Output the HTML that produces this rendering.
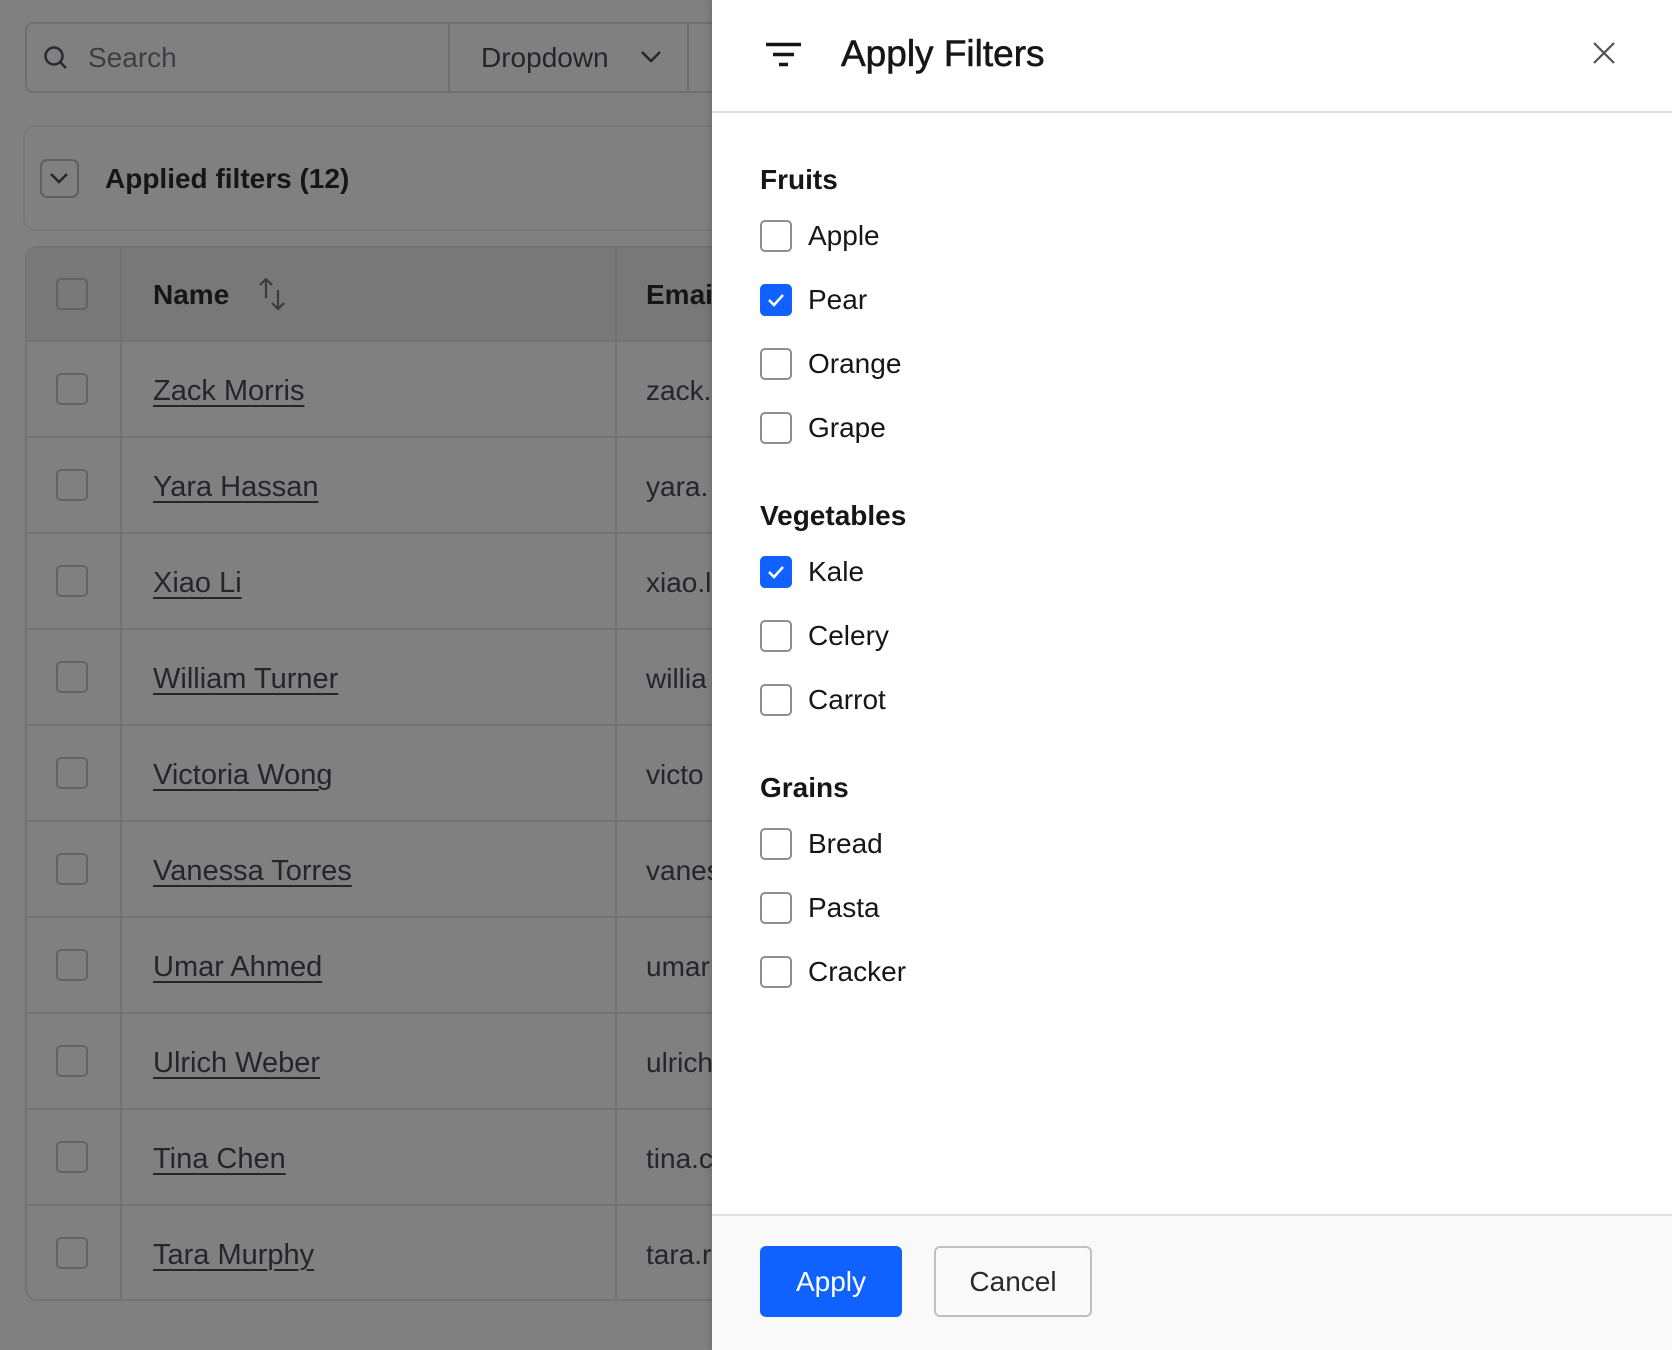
<!DOCTYPE html>
<html><head><meta charset="utf-8"><style>
*{box-sizing:border-box;margin:0;padding:0}
body{width:1672px;height:1350px;overflow:hidden;background:#808080;font-family:"Liberation Sans",sans-serif;position:relative}
.a{position:absolute}
.cb{position:absolute;width:32px;height:32px;border:2px solid #636367;border-radius:5px}
.tx{position:absolute;font-size:28px;color:#25252a;line-height:32px;white-space:nowrap}
.nm{font-size:29px;text-decoration:underline;text-decoration-thickness:2px;text-underline-offset:5px}
.hl{position:absolute;left:25px;width:700px;height:2px;background:#737373}
.pcb{position:absolute;left:760px;width:32px;height:32px;border:2px solid #8d8d92;border-radius:5px;background:#fff}
.pcb.on{background:#0f62fe;border-color:#0f62fe}
.lbl{position:absolute;left:808px;font-size:28px;color:#161616;line-height:32px}
.hd{position:absolute;left:760px;font-size:28px;font-weight:bold;color:#161616;line-height:32px}
</style></head><body>
<div class="a" style="left:25px;top:22px;width:720px;height:71px;border:2px solid #6f6f6f;border-radius:8px"></div>
<div class="a" style="left:448px;top:22px;width:2px;height:71px;background:#6f6f6f"></div>
<div class="a" style="left:687px;top:22px;width:2px;height:71px;background:#6f6f6f"></div>
<svg class="a" style="left:42px;top:44px" width="28" height="28" viewBox="0 0 28 28"><circle cx="12" cy="12" r="8.5" fill="none" stroke="#2a2a2e" stroke-width="2.5"/><path d="M18 18l6 6" stroke="#2a2a2e" stroke-width="2.5"/></svg>
<div class="tx" style="left:88px;top:42px;color:#3e3e42">Search</div>
<div class="tx" style="left:481px;top:42px">Dropdown</div>
<svg class="a" style="left:640px;top:48px" width="22" height="16" viewBox="0 0 22 16"><path d="M2 4l9 9 9-9" fill="none" stroke="#25252a" stroke-width="2.5"/></svg>
<div class="a" style="left:23px;top:125px;width:720px;height:106px;border:2px solid #787878;border-radius:12px"></div>
<div class="a" style="left:40px;top:159px;width:39px;height:39px;border:2px solid #606064;border-radius:7px"></div>
<svg class="a" style="left:48px;top:170px" width="22" height="16" viewBox="0 0 22 16"><path d="M3 4l8 8 8-8" fill="none" stroke="#25252a" stroke-width="2.5"/></svg>
<div class="tx" style="left:105px;top:163px;font-weight:bold;color:#161616">Applied filters (12)</div>
<div class="a" style="left:25px;top:246px;width:700px;height:1055px;border:2px solid #737373;border-radius:12px;border-right:none"></div>
<div class="a" style="left:27px;top:248px;width:690px;height:93px;background:#787878"></div>
<div class="a" style="left:120px;top:246px;width:2px;height:1055px;background:#737373"></div>
<div class="a" style="left:615px;top:246px;width:2px;height:1055px;background:#737373"></div>
<div class="tx" style="left:153px;top:279px;font-weight:bold;color:#161616">Name</div>
<svg class="a" style="left:257px;top:276px" width="32" height="36" viewBox="0 0 32 36"><path d="M9 22V3M3 9l6-6 6 6M21 14v19M15 27l6 6 6-6" fill="none" stroke="#3a3a40" stroke-width="2.2"/></svg>
<div class="tx" style="left:646px;top:279px;font-weight:bold;color:#161616">Email</div>
<div class="cb" style="left:56px;top:278px"></div>
<div id="rows"></div>
<script>
var n=["Zack Morris","Yara Hassan","Xiao Li","William Turner","Victoria Wong","Vanessa Torres","Umar Ahmed","Ulrich Weber","Tina Chen","Tara Murphy"];
var e=["zack.","yara.","xiao.l","willia","victo","vanes","umar","ulrich","tina.c","tara.r"];
var h="";
for(var i=0;i<10;i++){var t=341+i*96;
h+='<div class="hl" style="top:'+(t-1)+'px"></div>';
h+='<div class="cb" style="left:56px;top:'+(t+32)+'px"></div>';
h+='<div class="tx nm" style="left:153px;top:'+(t+34)+'px">'+n[i]+'</div>';
h+='<div class="tx" style="left:646px;top:'+(t+34)+'px">'+e[i]+'</div>';}
document.getElementById("rows").innerHTML=h;
</script>
<div class="a" style="left:712px;top:0;width:960px;height:1350px;background:#fff;box-shadow:-2px 0 6px rgba(0,0,0,.15)"></div>
<div class="a" style="left:712px;top:111px;width:960px;height:2px;background:#e0e0e0"></div>
<svg class="a" style="left:765px;top:42px" width="38" height="26" viewBox="0 0 38 26"><path d="M1 2.5h35M8 12.5h21M14 22.5h9" stroke="#161616" stroke-width="3.6"/></svg>
<div class="a" style="left:841px;top:34px;font-size:37px;color:#161616;line-height:40px;-webkit-text-stroke:0.6px #161616">Apply Filters</div>
<svg class="a" style="left:1592px;top:41px" width="24" height="24" viewBox="0 0 24 24"><path d="M2 2l20 20M22 2L2 22" stroke="#525256" stroke-width="2.2"/></svg>
<div class="hd" style="top:164px">Fruits</div>
<div class="pcb" style="top:220px"></div><div class="lbl" style="top:220px">Apple</div>
<div class="pcb on" style="top:284px"><svg width="28" height="28" viewBox="0 0 28 28"><path d="M7 14l5 5 9-10" fill="none" stroke="#fff" stroke-width="2.5"/></svg></div><div class="lbl" style="top:284px">Pear</div>
<div class="pcb" style="top:348px"></div><div class="lbl" style="top:348px">Orange</div>
<div class="pcb" style="top:412px"></div><div class="lbl" style="top:412px">Grape</div>
<div class="hd" style="top:500px">Vegetables</div>
<div class="pcb on" style="top:556px"><svg width="28" height="28" viewBox="0 0 28 28"><path d="M7 14l5 5 9-10" fill="none" stroke="#fff" stroke-width="2.5"/></svg></div><div class="lbl" style="top:556px">Kale</div>
<div class="pcb" style="top:620px"></div><div class="lbl" style="top:620px">Celery</div>
<div class="pcb" style="top:684px"></div><div class="lbl" style="top:684px">Carrot</div>
<div class="hd" style="top:772px">Grains</div>
<div class="pcb" style="top:828px"></div><div class="lbl" style="top:828px">Bread</div>
<div class="pcb" style="top:892px"></div><div class="lbl" style="top:892px">Pasta</div>
<div class="pcb" style="top:956px"></div><div class="lbl" style="top:956px">Cracker</div>
<div class="a" style="left:712px;top:1214px;width:960px;height:136px;background:#f9f9f9;border-top:2px solid #e0e0e0"></div>
<div class="a" style="left:760px;top:1246px;width:142px;height:71px;background:#0f62fe;border-radius:6px;color:#fff;font-size:28px;line-height:71px;text-align:center">Apply</div>
<div class="a" style="left:934px;top:1246px;width:158px;height:71px;background:#fafafa;border:2px solid #c0c0c0;border-radius:6px;color:#2a2a2e;font-size:28px;line-height:67px;text-align:center">Cancel</div>
</body></html>
